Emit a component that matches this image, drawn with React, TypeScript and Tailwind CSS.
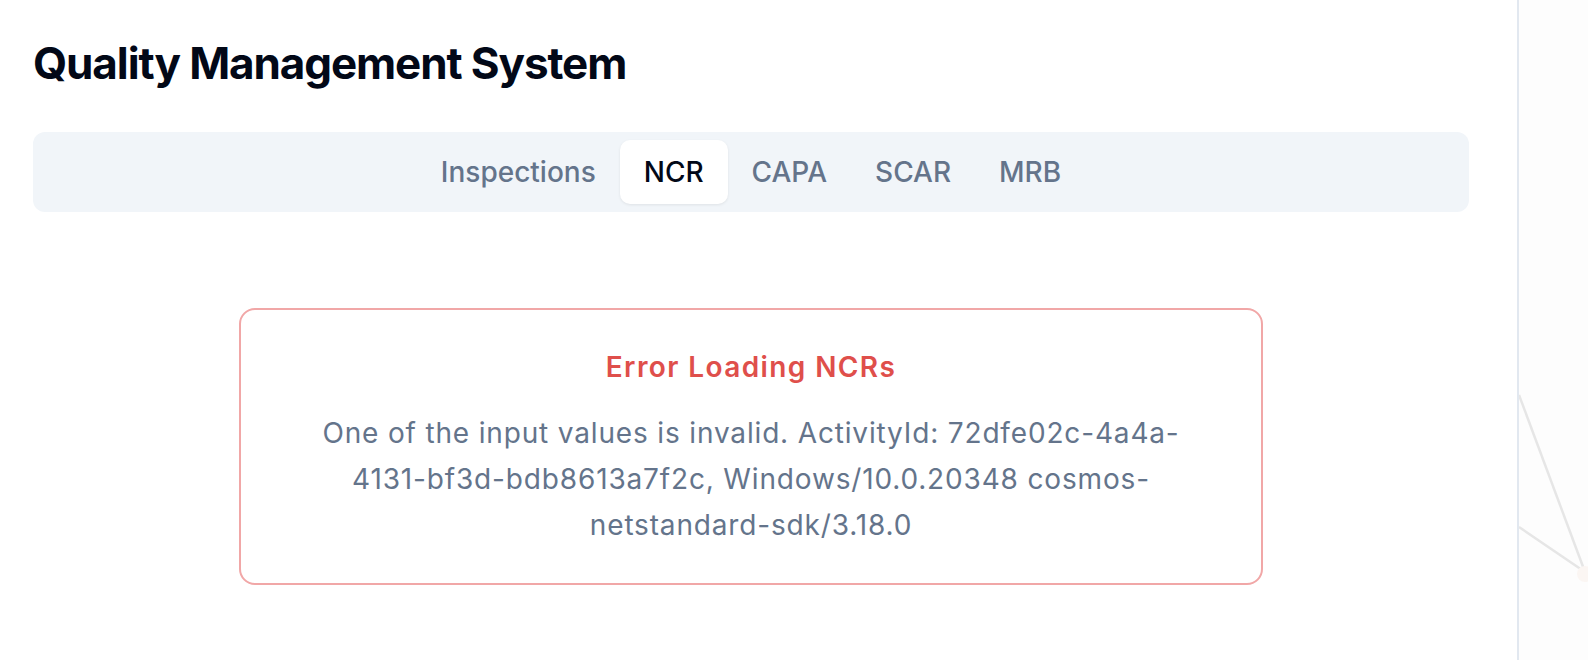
import React from 'react'

const TABS = ['Inspections', 'NCR', 'CAPA', 'SCAR', 'MRB']

const ErrorMessage =
  'One of the input values is invalid. ActivityId: 72dfe02c-4a4a-4131-bf3d-bdb8613a7f2c, Windows/10.0.20348 cosmos-netstandard-sdk/3.18.0'

const TabBar: React.FC<{ active: string }> = ({ active }) => {
  return (
    <div className="flex h-[80px] items-center justify-center rounded-[12px] bg-[#f1f5f9] p-[8px]">
      {TABS.map(tab => (
        <button
          key={tab}
          type="button"
          className={
            tab === active
              ? 'flex h-[64px] items-center rounded-[10px] bg-white px-[24px] text-[28px] font-medium text-[#020817] shadow-[0_1px_3px_rgba(0,0,0,0.08)]'
              : 'flex h-[64px] items-center rounded-[10px] px-[24px] text-[28px] font-medium text-[#64748b]'
          }
        >
          {tab}
        </button>
      ))}
    </div>
  )
}

const ErrorCard: React.FC<{ title: string; message: string }> = ({ title, message }) => {
  return (
    <div className="mx-auto mt-[96px] w-[1024px] rounded-[16px] border-2 border-[#f1a7a7] bg-white px-[48px] pt-[37px] pb-[35px] text-center">
      <h3 className="text-[28px] leading-[40px] font-semibold tracking-[0.05em] text-[#df4f4b]">{title}</h3>
      <p className="mx-auto mt-[23px] max-w-[880px] text-[28px] leading-[46px] tracking-[0.03em] text-[#64748b]">
        {message}
      </p>
    </div>
  )
}

export default function App() {
  return (
    <div className="flex h-[660px] w-full overflow-hidden bg-white font-['Inter','Noto_Sans',sans-serif]">
      <main className="flex-1 border-r-2 border-[#e2e8f0] pt-[33px] pr-[48px] pl-[33px]">
        <h1 className="mb-[39px] text-[44px] leading-[60px] font-bold tracking-tight text-[#020817]">
          Quality Management System
        </h1>
        <TabBar active="NCR" />
        <ErrorCard title="Error Loading NCRs" message={ErrorMessage} />
      </main>
      <aside className="relative w-[69px] bg-[#fdfdfd]">
        <svg className="absolute inset-0 h-full w-full" viewBox="0 0 69 660" fill="none">
          <path d="M0 395 L66 572" stroke="#e6e6e6" strokeWidth="2.5" />
          <path d="M0 527 L66 572" stroke="#e6e6e6" strokeWidth="2.5" />
          <circle cx="66" cy="574" r="8" fill="#fbf6f3" />
        </svg>
      </aside>
    </div>
  )
}
